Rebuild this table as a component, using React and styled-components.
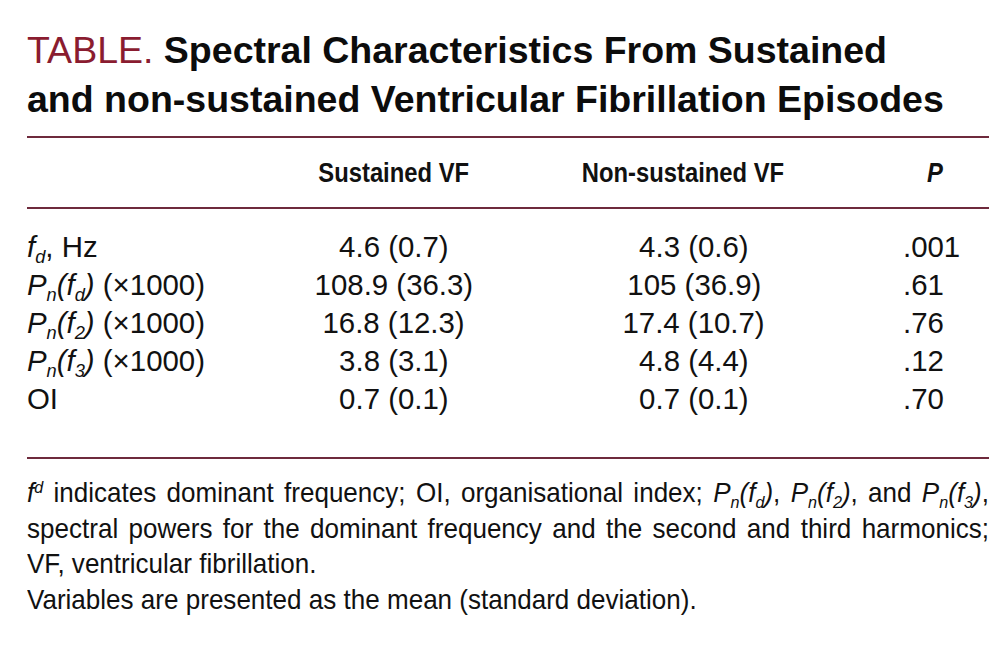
import React from "react";
import styled, { createGlobalStyle } from "styled-components";

const GlobalStyle = createGlobalStyle`
  html, body {
    margin: 0;
    padding: 0;
    background: #fff;
  }
  body {
    font-family: "Liberation Sans", Arial, sans-serif;
    color: #111;
  }
`;

const RULE = "#6e2a3c";
const COLS = "255px 224px 376px 1fr";

const StyledPage = styled.div`
  width: 1000px;
  height: 650px;
  padding: 26px 11px 0 27px;
  box-sizing: border-box;
  overflow: hidden;
`;

const StyledTitle = styled.h1`
  margin: 0 0 12px 0;
  font-size: 37.5px;
  line-height: 49px;
  font-weight: 700;
  color: #0c0c0c;
`;

const StyledLabel = styled.span`
  font-weight: 400;
  color: #8a1c30;
`;

const StyledTable = styled.div`
  border-top: 2px solid ${RULE};
  border-bottom: 2px solid ${RULE};
`;

const StyledHeadRow = styled.div`
  display: grid;
  grid-template-columns: ${COLS};
  border-bottom: 2px solid ${RULE};
  font-size: 28px;
  line-height: 69px;
  font-weight: 700;
`;

const StyledBody = styled.div`
  padding: 19px 0 39px;
`;

const StyledRow = styled.div`
  display: grid;
  grid-template-columns: ${COLS};
  font-size: 30px;
  line-height: 38px;
`;

const StyledCell = styled.div`
  text-align: ${(p) => p.$align || "center"};
  padding-left: ${(p) => p.$pad || 0}px;
  padding-right: ${(p) => p.$padRight || 0}px;
  white-space: nowrap;
`;

// condensed look: the typeface of the table is a narrow grotesque
const StyledSqueeze = styled.span`
  display: inline-block;
  transform: scaleX(${(p) => p.$s || 0.98});
  transform-origin: ${(p) => p.$origin || "center"};
`;

const StyledItalic = styled.i`
  font-style: italic;
`;

const StyledSub = styled.sub`
  font-size: 0.62em;
  line-height: 0;
  vertical-align: -0.32em;
  font-style: italic;
`;

const StyledSup = styled.sup`
  font-size: 0.62em;
  line-height: 0;
  vertical-align: 0.5em;
  font-style: italic;
`;

const StyledNotes = styled.div`
  width: calc(100% / 0.93);
  transform: scaleX(0.93);
  transform-origin: left top;
  padding-top: 16px;
  font-size: 28px;
  line-height: 35.5px;
  color: #111;
`;

const StyledNoteLine = styled.div`
  text-align: ${(p) => (p.$justify ? "justify" : "left")};
  text-align-last: ${(p) => (p.$justify ? "justify" : "left")};
  white-space: nowrap;
`;

// P_n(f_x) notation, all in italics
const Pn = ({ sub }) => (
  <StyledItalic>
    P<StyledSub>n</StyledSub>(f<StyledSub>{sub}</StyledSub>)
  </StyledItalic>
);

const rows = [
  {
    label: (
      <>
        <StyledItalic>
          f<StyledSub>d</StyledSub>
        </StyledItalic>
        , Hz
      </>
    ),
    a: "4.6 (0.7)",
    b: "4.3 (0.6)",
    p: ".001",
  },
  {
    label: (
      <>
        <Pn sub="d" /> (×1000)
      </>
    ),
    a: "108.9 (36.3)",
    b: "105 (36.9)",
    p: ".61",
  },
  {
    label: (
      <>
        <Pn sub="2" /> (×1000)
      </>
    ),
    a: "16.8 (12.3)",
    b: "17.4 (10.7)",
    p: ".76",
  },
  {
    label: (
      <>
        <Pn sub="3" /> (×1000)
      </>
    ),
    a: "3.8 (3.1)",
    b: "4.8 (4.4)",
    p: ".12",
  },
  { label: "OI", a: "0.7 (0.1)", b: "0.7 (0.1)", p: ".70" },
];

const App = () => {
  return (
    <>
      <GlobalStyle />
      <StyledPage>
        <StyledTitle>
          <StyledLabel>TABLE.</StyledLabel> Spectral Characteristics From Sustained
          <br />
          and non-sustained Ventricular Fibrillation Episodes
        </StyledTitle>
        <StyledTable>
          <StyledHeadRow>
            <StyledCell />
            <StyledCell>
              <StyledSqueeze $s={0.85}>Sustained VF</StyledSqueeze>
            </StyledCell>
            <StyledCell $padRight={22}>
              <StyledSqueeze $s={0.85}>Non-sustained VF</StyledSqueeze>
            </StyledCell>
            <StyledCell $align="left" $pad={45}>
              <StyledSqueeze $s={0.85} $origin="left">
                <StyledItalic>P</StyledItalic>
              </StyledSqueeze>
            </StyledCell>
          </StyledHeadRow>
          <StyledBody>
            {rows.map((row, i) => (
              <StyledRow key={i}>
                <StyledCell $align="left">
                  <StyledSqueeze $origin="left">{row.label}</StyledSqueeze>
                </StyledCell>
                <StyledCell>
                  <StyledSqueeze>{row.a}</StyledSqueeze>
                </StyledCell>
                <StyledCell>
                  <StyledSqueeze>{row.b}</StyledSqueeze>
                </StyledCell>
                <StyledCell $align="left" $pad={21}>
                  <StyledSqueeze $origin="left">{row.p}</StyledSqueeze>
                </StyledCell>
              </StyledRow>
            ))}
          </StyledBody>
        </StyledTable>
        <StyledNotes>
          <StyledNoteLine $justify>
            <StyledItalic>f</StyledItalic>
            <StyledSup>d</StyledSup> indicates dominant frequency; OI,
            organisational index; <Pn sub="d" />, <Pn sub="2" />, and{" "}
            <Pn sub="3" />,
          </StyledNoteLine>
          <StyledNoteLine $justify>
            spectral powers for the dominant frequency and the second and third
            harmonics;
          </StyledNoteLine>
          <StyledNoteLine>VF, ventricular fibrillation.</StyledNoteLine>
          <StyledNoteLine>
            Variables are presented as the mean (standard deviation).
          </StyledNoteLine>
        </StyledNotes>
      </StyledPage>
    </>
  );
};

export default App;
